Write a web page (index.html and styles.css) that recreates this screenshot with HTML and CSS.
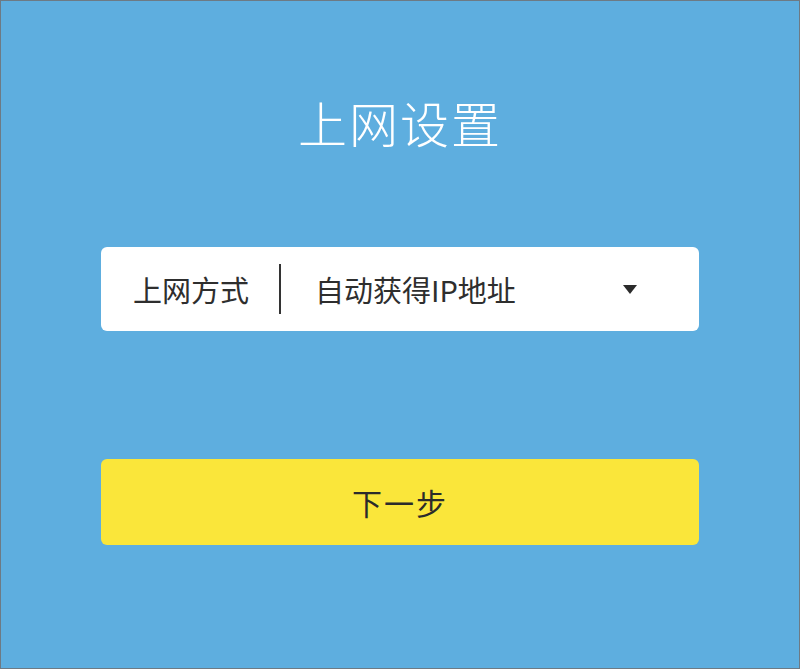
FILE: index.html
```html
<!DOCTYPE html>
<html lang="zh-CN">
<head>
  <meta charset="UTF-8">
  <title>上网设置</title>
  <link rel="stylesheet" href="styles.css">
</head>
<body>

  <div class="screen">
    <h1 class="title">上网设置</h1>

    <div class="field">
      <span class="field-label">上网方式</span>
      <span class="field-divider"></span>
      <span class="field-value">自动获得IP地址</span>
      <svg class="field-arrow" width="14" height="9" viewBox="0 0 14 9">
        <path d="M0 0 H14 L7 9 Z" fill="#2b2b2b"/>
      </svg>
    </div>

    <button class="next-button">下一步</button>
  </div>

</body>
</html>
```

FILE: styles.css
```css
html, body {
  margin: 0;
  padding: 0;
}

body {
  font-family: "Noto Sans CJK SC", "Noto Sans", sans-serif;
  background-color: #5eaedf;
}

.screen {
  box-sizing: border-box;
  width: 800px;
  height: 669px;
  padding: 97px 100px 0 100px;
  border: 1px solid #6d7a84;
  background-color: #5eaedf;
}

.title {
  margin: 0;
  font-size: 49px;
  line-height: 48px;
  font-weight: 300;
  color: #ffffff;
  text-align: center;
  letter-spacing: 2px;
}

.field {
  display: flex;
  align-items: center;
  height: 84px;
  margin-top: 101px;
  padding: 0 62px 0 32px;
  background-color: #ffffff;
  border-radius: 6px;
  color: #2e2e2e;
  font-size: 29px;
}

.field-divider {
  width: 2px;
  height: 50px;
  margin-left: 30px;
  background-color: #333333;
}

.field-value {
  margin-left: 34px;
}

.field-arrow {
  margin-left: auto;
}

.next-button {
  display: block;
  width: 100%;
  height: 86px;
  margin-top: 128px;
  border: none;
  border-radius: 6px;
  background-color: #fae63a;
  color: #2b2b2b;
  font-family: inherit;
  font-size: 30px;
  letter-spacing: 2px;
  cursor: pointer;
}
```
